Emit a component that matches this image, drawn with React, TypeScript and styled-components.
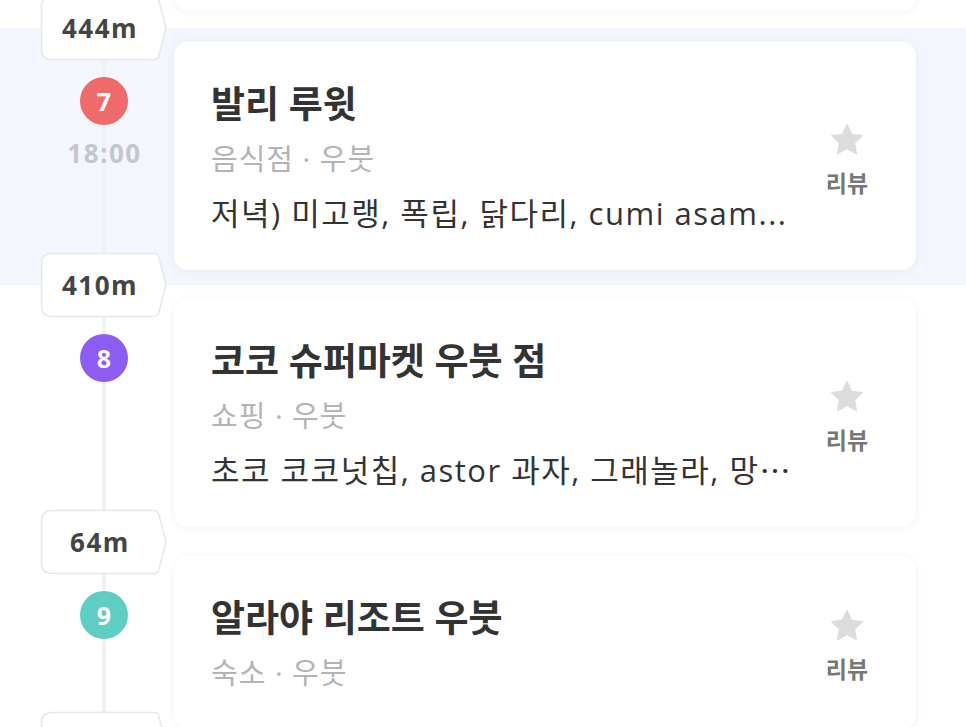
import React from "react";
import styled, { createGlobalStyle } from "styled-components";

const GlobalStyle = createGlobalStyle`
  html, body {
    margin: 0;
    padding: 0;
    background: #ffffff;
    overflow: hidden;
  }
  body {
    font-family: "Open Sans", "Noto Sans CJK KR", sans-serif;
    -webkit-font-smoothing: antialiased;
  }
`;

const Page = styled.div`
  width: 966px;
  height: 727px;
  overflow: hidden;
  background: #ffffff;
`;

const PeekRow = styled.div`
  height: 28px;
  overflow: hidden;
  display: flex;
  justify-content: flex-end;
  align-items: flex-end;
  padding-right: 50px;
`;

const PeekCard = styled.div`
  width: 742px;
  height: 60px;
  margin-bottom: 17px;
  background: #ffffff;
  border-radius: 14px;
  box-shadow: 0 1px 8px rgba(30, 40, 70, 0.06);
`;

const Row = styled.div<{ $highlight?: boolean }>`
  position: relative;
  display: flex;
  align-items: flex-start;
  padding: 14px 50px 15px 0;
  background: ${(p) => (p.$highlight ? "#f3f6fc" : "#ffffff")};

  &::before {
    content: "";
    position: absolute;
    left: 102px;
    top: 0;
    bottom: 0;
    width: 4px;
    background: ${(p) => (p.$highlight ? "#eef1f7" : "#f2f2f3")};
  }
`;

const Timeline = styled.div`
  position: relative;
  z-index: 1;
  width: 140px;
  padding-left: 34px;
  padding-top: 35px;
  display: flex;
  flex-direction: column;
  align-items: center;
  flex-shrink: 0;
`;

const NumberDot = styled.div<{ $color: string }>`
  width: 48px;
  height: 48px;
  border-radius: 50%;
  background: ${(p) => p.$color};
  color: #ffffff;
  display: flex;
  align-items: center;
  justify-content: center;
  font-family: "Open Sans", sans-serif;
  font-weight: 700;
  font-size: 25px;
  line-height: 1;
`;

const TimeText = styled.div`
  margin-top: 13px;
  padding-left: 1px;
  font-family: "Open Sans", sans-serif;
  font-weight: 700;
  font-size: 26px;
  line-height: 30px;
  letter-spacing: 1.5px;
  color: #c3c6cb;
`;

const Badge = styled.div`
  position: absolute;
  z-index: 3;
  left: 40px;
  top: 0;
  width: 127px;
  height: 66px;
  transform: translateY(-50%);
`;

const BadgeShape = styled.svg`
  position: absolute;
  inset: 0;
`;

const BadgeText = styled.div`
  position: relative;
  width: 118px;
  height: 66px;
  padding-left: 2px;
  box-sizing: border-box;
  display: flex;
  align-items: center;
  justify-content: center;
  font-family: "Open Sans", sans-serif;
  font-weight: 700;
  font-size: 26px;
  letter-spacing: 1.5px;
  color: #444444;
`;

const Card = styled.div`
  flex: 1;
  min-width: 0;
  display: flex;
  align-items: center;
  background: #ffffff;
  border-radius: 14px;
  padding: 34px 24px 29px 37px;
  box-shadow: 0 1px 8px rgba(30, 40, 70, 0.06);
`;

const Content = styled.div`
  flex: 1;
  min-width: 0;
`;

const Title = styled.div`
  font-size: 37px;
  line-height: 55px;
  font-weight: 700;
  color: #333333;
  white-space: nowrap;
  overflow: hidden;
  text-overflow: ellipsis;
`;

const Sub = styled.div`
  font-size: 29px;
  line-height: 55px;
  letter-spacing: 1px;
  color: #b4b4b4;
  white-space: nowrap;
`;

const Memo = styled.div`
  font-size: 31px;
  line-height: 55px;
  letter-spacing: 1.5px;
  color: #333333;
  white-space: nowrap;
  overflow: hidden;
  text-overflow: ellipsis;
`;

const Review = styled.div`
  width: 90px;
  flex-shrink: 0;
  display: flex;
  flex-direction: column;
  align-items: center;
`;

const ReviewLabel = styled.div`
  margin-top: 10px;
  font-size: 23px;
  line-height: 28px;
  font-weight: 600;
  color: #777777;
`;

const Star = () => (
  <svg width="38" height="38" viewBox="0 0 24 24">
    <path
      d="M12 2.2l2.95 6.2 6.75.85-4.95 4.7 1.25 6.75L12 17.4l-6 3.3 1.25-6.75L2.3 9.25l6.75-.85z"
      fill="#dcdcdc"
      stroke="#dcdcdc"
      strokeWidth="0.8"
      strokeLinejoin="round"
    />
  </svg>
);

const DistanceBadge = ({ label }: { label: string }) => (
  <Badge>
    <BadgeShape width="127" height="66" viewBox="0 0 127 66">
      <path
        d="M12 1.5 H114 Q117.5 1.5 118.6 4.8 L125.2 29.8 Q126 33 125.2 36.2 L118.6 61.2 Q117.5 64.5 114 64.5 H12 Q1.5 64.5 1.5 54 V12 Q1.5 1.5 12 1.5 Z"
        fill="#ffffff"
        stroke="#e7e7e9"
        strokeWidth="1.5"
      />
    </BadgeShape>
    <BadgeText>{label}</BadgeText>
  </Badge>
);

type Item = {
  n: number;
  color: string;
  dist: string;
  time?: string;
  title: string;
  sub: string;
  memo?: string;
  highlight?: boolean;
};

const items: Item[] = [
  {
    n: 7,
    color: "#ee6a6b",
    dist: "444m",
    time: "18:00",
    title: "발리 루윗",
    sub: "음식점 · 우붓",
    memo: "저녁) 미고랭, 폭립, 닭다리, cumi asam...",
    highlight: true,
  },
  {
    n: 8,
    color: "#8d5cf3",
    dist: "410m",
    title: "코코 슈퍼마켓 우붓 점",
    sub: "쇼핑 · 우붓",
    memo: "초코 코코넛칩, astor 과자, 그래놀라, 망⋯",
  },
  {
    n: 9,
    color: "#5ecdc2",
    dist: "64m",
    title: "알라야 리조트 우붓",
    sub: "숙소 · 우붓",
  },
];

export default function App() {
  return (
    <Page>
      <GlobalStyle />
      <PeekRow>
        <PeekCard />
      </PeekRow>
      {items.map((it) => (
        <Row key={it.n} $highlight={it.highlight}>
          <DistanceBadge label={it.dist} />
          <Timeline>
            <NumberDot $color={it.color}>{it.n}</NumberDot>
            {it.time && <TimeText>{it.time}</TimeText>}
          </Timeline>
          <Card>
            <Content>
              <Title>{it.title}</Title>
              <Sub>{it.sub}</Sub>
              {it.memo && <Memo>{it.memo}</Memo>}
            </Content>
            <Review>
              <Star />
              <ReviewLabel>리뷰</ReviewLabel>
            </Review>
          </Card>
        </Row>
      ))}
      <Row>
        <DistanceBadge label="" />
      </Row>
    </Page>
  );
}
